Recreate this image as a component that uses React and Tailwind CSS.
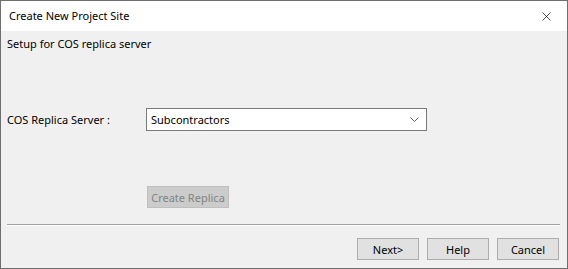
import { X } from 'lucide-react';

const Btn = ({ children }) => (
  <button className="h-[22px] w-[62px] border border-[#adadad] bg-[#e1e1e1] text-[11px] text-black leading-none whitespace-nowrap">
    {children}
  </button>
);

export default function App() {
  return (
    <div className="w-[568px] h-[269px] bg-[#f0f0f0] border border-[#6e6e6e] flex flex-col overflow-hidden text-[11px] text-black" style={{ fontFamily: '"Noto Sans", Arial, sans-serif' }}>
      {/* title bar */}
      <div className="h-[30px] bg-white flex items-center justify-between pl-[8px] pr-[13px] shrink-0">
        <span className="leading-[16px]">Create New Project Site</span>
        <X className="w-[15px] h-[15px]" strokeWidth={1.1} />
      </div>

      <div className="flex-1 flex flex-col px-[6px]">
        <div className="mt-[5px] h-[16px] leading-[16px]">Setup for COS replica server</div>

        <div className="mt-[56px] h-[23px] flex items-center">
          <span className="w-[139px] leading-[16px]">COS Replica Server :</span>
          <div className="w-[281px] h-[23px] bg-white border border-[#7a7a7a] flex items-center justify-between pl-[4px] pr-[6px]">
            <span className="leading-[16px]">Subcontractors</span>
            <svg width="9" height="5" viewBox="0 0 9 5" className="mr-[1px]">
              <polyline points="0.5,0.5 4.5,4.5 8.5,0.5" fill="none" stroke="#606060" strokeWidth="1" />
            </svg>
          </div>
        </div>

        <div className="mt-[55px] h-[22px] pl-[140px]">
          <button className="h-[22px] w-[82px] border border-[#bfbfbf] bg-[#cccccc] text-[11px] text-[#838383] leading-none whitespace-nowrap" disabled>
            Create Replica
          </button>
        </div>

        <div className="mt-[16px] h-[2px] border-t border-[#a0a0a0] border-b border-b-white mr-[1px]" />

        <div className="mt-[12px] flex justify-end gap-[8px] pr-[2px]">
          <Btn>Next&gt;</Btn>
          <Btn>Help</Btn>
          <Btn>Cancel</Btn>
        </div>
      </div>
    </div>
  );
}
